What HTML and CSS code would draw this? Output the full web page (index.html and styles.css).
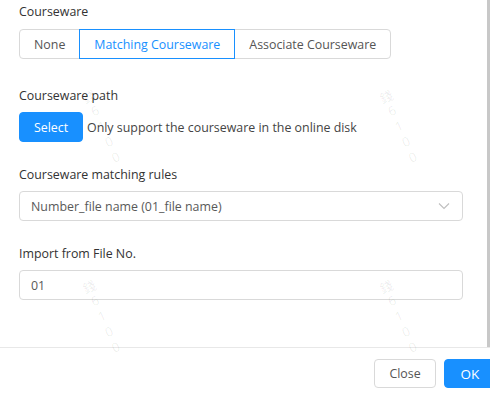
FILE: index.html
```html
<!DOCTYPE html>
<html lang="en">
<head>
  <meta charset="UTF-8">
  <title>Import Courseware</title>
  <link rel="stylesheet" href="styles.css">
</head>
<body>
<div class="dialog">
  <div class="dialog-body">
    <div class="form-item first">
      <label class="form-label">Courseware</label>
      <div class="radio-group">
        <span class="radio-btn">None</span>
        <span class="radio-btn active">Matching Courseware</span>
        <span class="radio-btn">Associate Courseware</span>
      </div>
    </div>

    <div class="form-item">
      <label class="form-label">Courseware path</label>
      <div class="path-row">
        <button class="btn btn-primary btn-select">Select</button>
        <span class="hint">Only support the courseware in the online disk</span>
      </div>
    </div>

    <div class="form-item">
      <label class="form-label">Courseware matching rules</label>
      <div class="select">
        <span class="select-value">Number_file name (01_file name)</span>
        <svg class="select-arrow" width="12" height="8" viewBox="0 0 12 8">
          <path d="M1 1.5 L6 6.5 L11 1.5" fill="none" stroke="#bfbfbf" stroke-width="1.1"/>
        </svg>
      </div>
    </div>

    <div class="form-item">
      <label class="form-label">Import from File No.</label>
      <input class="input" type="text" value="01">
    </div>
  </div>

  <div class="dialog-footer">
    <button class="btn">Close</button>
    <button class="btn btn-primary">OK</button>
  </div>

  <!-- watermark -->
  <span class="watermark wm-1">錢6100</span>
  <span class="watermark wm-2">錢6100</span>
  <span class="watermark wm-3">錢6100</span>
  <span class="watermark wm-4">錢6100</span>
</div>
</body>
</html>
```

FILE: styles.css
```css
body {
    margin: 0;
    padding: 0;
    font-family: "Open Sans", "Noto Sans CJK SC", sans-serif;
    font-size: 12.4px;
    color: #333;
    background-color: white;
    overflow: hidden;
}
.dialog {
    position: relative;
    width: 490px;
    height: 394px;
    overflow: hidden;
}
.dialog-body {
    height: 347px;
    box-sizing: border-box;
    padding: 2px 24px 0 19px;
    border-right: 3px solid #c8c8c8;
}
.form-item {
    margin-bottom: 23px;
}
.form-item.first {
    margin-bottom: 27px;
}
.form-label {
    display: block;
    line-height: 20px;
    margin-bottom: 6px;
    color: #333;
}
.first .form-label {
    margin-bottom: 7px;
}
.radio-group {
    display: inline-flex;
    height: 30px;
}
.radio-btn {
    display: flex;
    align-items: center;
    padding: 0 14px;
    border: 1px solid #d9d9d9;
    margin-left: -1px;
    color: #555;
    box-sizing: border-box;
}
.radio-btn:first-child {
    margin-left: 0;
    border-radius: 4px 0 0 4px;
}
.radio-btn:last-child {
    border-radius: 0 4px 4px 0;
}
.radio-btn.active {
    color: #1890ff;
    border-color: #1890ff;
    position: relative;
}
.path-row {
    display: flex;
    align-items: center;
    gap: 4px;
}
.hint {
    color: #444;
}
.btn {
    height: 30px;
    padding: 0 15px;
    font-family: inherit;
    font-size: 12.4px;
    color: #555;
    background-color: white;
    border: 1px solid #d9d9d9;
    border-radius: 4px;
    cursor: pointer;
}
.btn-primary {
    color: white;
    background-color: #1890ff;
    border-color: #1890ff;
}
.btn-select {
    width: 64px;
    padding: 0;
}
.select {
    display: flex;
    align-items: center;
    justify-content: space-between;
    height: 30px;
    box-sizing: border-box;
    padding: 0 12px 0 11px;
    border: 1px solid #d9d9d9;
    border-radius: 4px;
}
.select-value {
    color: #595959;
}
.input {
    display: block;
    width: 100%;
    height: 30px;
    box-sizing: border-box;
    padding: 0 11px;
    font-family: inherit;
    font-size: 12.4px;
    color: #595959;
    border: 1px solid #d9d9d9;
    border-radius: 4px;
    outline: none;
}
.dialog-footer {
    display: flex;
    justify-content: flex-end;
    gap: 8px;
    width: 512px;
    box-sizing: border-box;
    padding: 11px 16px 0 0;
    border-top: 1px solid #e8e8e8;
}
.dialog-footer .btn {
    height: 29px;
}
.dialog-footer .btn:first-child {
    width: 62px;
    padding: 0;
}
.dialog-footer .btn-primary {
    width: 52px;
    padding: 0;
    font-size: 13.5px;
}
.watermark {
    position: absolute;
    font-size: 13px;
    line-height: 13px;
    color: rgba(0, 0, 0, 0.08);
    writing-mode: vertical-rl;
    text-orientation: upright;
    letter-spacing: -1px;
    transform-origin: 0 0;
    transform: rotate(-24deg);
    pointer-events: none;
    white-space: nowrap;
}
.wm-1 { left: 80px; top: 94px; }
.wm-2 { left: 377px; top: 94px; }
.wm-3 { left: 80px; top: 284px; }
.wm-4 { left: 377px; top: 284px; }
```
